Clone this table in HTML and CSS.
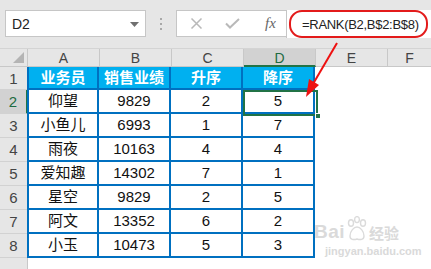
FILE: index.html
```html
<!DOCTYPE html>
<html>
<head>
<meta charset="utf-8">
<link rel="stylesheet" href="styles.css">
</head>
<body>
<div class="app">
  <div class="topbar">
    <div class="namebox">
      <span class="nb-text">D2</span>
      <svg class="dd" width="9" height="5" viewBox="0 0 9 5"><path d="M0 0H9L4.5 5Z" fill="#707070"/></svg>
    </div>
    <div class="sep"><i></i><i></i><i></i></div>
    <div class="btns">
      <svg class="ic" width="13" height="11" viewBox="0 0 13 11"><path d="M1.5 0.5L11.5 10.5M11.5 0.5L1.5 10.5" stroke="#b9b9b9" stroke-width="1.5" fill="none"/></svg>
      <svg class="ic" width="15" height="11" viewBox="0 0 15 11"><path d="M1 5.5L5 9.5L14 1" stroke="#b9b9b9" stroke-width="2" fill="none"/></svg>
      <span class="fx">fx</span>
    </div>
    <div class="formula">
      <div class="ring">=RANK(B2,B$2:B$8)</div>
    </div>
  </div>

  <div class="sheet">
    <div class="colhead">
      <div class="corner"><svg width="11" height="11" viewBox="0 0 11 11"><path d="M11 0V11H0Z" fill="#b4b4b4"/></svg></div>
      <div class="ch">A</div>
      <div class="ch">B</div>
      <div class="ch">C</div>
      <div class="ch sel">D</div>
      <div class="ch">E</div>
      <div class="ch last">F</div>
    </div>

    <div class="row first">
      <div class="rh">1</div>
      <div class="c h lead">业务员</div>
      <div class="c h">销售业绩</div>
      <div class="c h">升序</div>
      <div class="c h">降序</div>
      <div class="rest"></div>
    </div>
    <div class="row">
      <div class="rh sel">2</div>
      <div class="c lead">仰望</div>
      <div class="c">9829</div>
      <div class="c">2</div>
      <div class="c">5</div>
      <div class="rest"></div>
    </div>
    <div class="row">
      <div class="rh">3</div>
      <div class="c lead">小鱼儿</div>
      <div class="c">6993</div>
      <div class="c">1</div>
      <div class="c">7</div>
      <div class="rest"></div>
    </div>
    <div class="row">
      <div class="rh">4</div>
      <div class="c lead">雨夜</div>
      <div class="c">10163</div>
      <div class="c">4</div>
      <div class="c">4</div>
      <div class="rest"></div>
    </div>
    <div class="row">
      <div class="rh">5</div>
      <div class="c lead">爱知趣</div>
      <div class="c">14302</div>
      <div class="c">7</div>
      <div class="c">1</div>
      <div class="rest"></div>
    </div>
    <div class="row">
      <div class="rh">6</div>
      <div class="c lead">星空</div>
      <div class="c">9829</div>
      <div class="c">2</div>
      <div class="c">5</div>
      <div class="rest"></div>
    </div>
    <div class="row">
      <div class="rh">7</div>
      <div class="c lead">阿文</div>
      <div class="c">13352</div>
      <div class="c">6</div>
      <div class="c">2</div>
      <div class="rest"></div>
    </div>
    <div class="row">
      <div class="rh">8</div>
      <div class="c lead">小玉</div>
      <div class="c">10473</div>
      <div class="c">5</div>
      <div class="c">3</div>
      <div class="rest"></div>
    </div>
    <div class="row blank">
      <div class="rh"></div>
      <div class="rest"></div>
    </div>

    <div class="selection"><span class="handle"></span></div>

    <div class="watermark">
      <div class="wm-top">
        <span class="wm-bai">Bai</span>
        <svg class="paw" width="22" height="26" viewBox="0 0 22 26">
          <g fill="none" stroke="#d8d8d8" stroke-width="1.4">
            <ellipse cx="5" cy="7" rx="2.5" ry="3.2"/>
            <ellipse cx="11" cy="3.6" rx="2.4" ry="3"/>
            <ellipse cx="17" cy="7" rx="2.5" ry="3.2"/>
            <path d="M4 20C4 15 8 11 11 11S18 15 18 20C18 24 14 24 11 23C8 24 4 24 4 20Z"/>
          </g>
        </svg>
        <span class="wm-jy">经验</span>
      </div>
      <div class="wm-url">jingyan.baidu.com</div>
    </div>
  </div>

  <svg class="arrow" width="431" height="269" viewBox="0 0 431 269">
    <line x1="337" y1="43" x2="313" y2="84" stroke="#ee1111" stroke-width="2"/>
    <path d="M306 97L309 79L319 85Z" fill="#ee1111"/>
  </svg>
</div>
</body>
</html>
```

FILE: styles.css
```css
* { box-sizing: border-box; }
html, body { margin: 0; padding: 0; }
body {
  width: 431px;
  height: 269px;
  overflow: hidden;
  background: #ffffff;
  font-family: "Liberation Sans", "Noto Sans CJK SC", sans-serif;
}
.app { position: relative; width: 431px; height: 269px; overflow: hidden; }

.topbar {
  height: 48px;
  background: #e6e6e6;
  display: flex;
  align-items: flex-start;
  padding-top: 10px;
  padding-left: 5px;
}
.namebox {
  width: 141px;
  height: 27px;
  background: #fff;
  border: 1px solid #c6c6c6;
  display: flex;
  align-items: center;
  justify-content: space-between;
  padding: 0 6px 0 6px;
}
.nb-text { font-size: 14px; color: #222; }
.dd { margin-top: 1px; }
.sep {
  width: 30px;
  height: 27px;
  display: flex;
  flex-direction: column;
  align-items: center;
  justify-content: center;
  gap: 3px;
}
.sep i { display: block; width: 2px; height: 2px; background: #a8a8a8; }
.btns {
  width: 111px;
  height: 27px;
  background: #fff;
  border: 1px solid #c6c6c6;
  display: flex;
  align-items: center;
  padding-left: 13px;
  gap: 22px;
}
.fx {
  font-family: "Liberation Serif", serif;
  font-style: italic;
  font-size: 15px;
  color: #666;
  margin-left: 3px;
}
.formula {
  flex: 1;
  height: 28px;
  background: #fff;
  border-left: 1px solid #c6c6c6;
  margin-left: -1px;
  padding-left: 2px;
}
.ring {
  width: 139px;
  height: 28px;
  border: 2px solid #e31b1b;
  border-radius: 13px;
  font-size: 13px;
  color: #222;
  display: flex;
  align-items: center;
  padding-left: 11px;
  letter-spacing: -0.3px;
  white-space: nowrap;
}

.sheet { position: relative; }
.colhead {
  height: 19px;
  display: flex;
  background: #e6e6e6;
  border-top: 1px solid #d4d4d4;
}
.corner {
  width: 28px;
  border-right: 1px solid #c8c8c8;
  border-bottom: 1px solid #c8c8c8;
  display: flex;
  align-items: flex-end;
  justify-content: flex-end;
  padding: 0 3px 3px 0;
}
.ch {
  width: 72px;
  border-right: 1px solid #c8c8c8;
  border-bottom: 1px solid #c8c8c8;
  text-align: center;
  font-size: 14px;
  line-height: 18px;
  color: #444;
}
.ch.sel {
  background: #d2d2d2;
  color: #1e6b41;
  border-bottom: 2px solid #217346;
}
.ch.last { flex: 1; border-right: none; }

.row { display: flex; height: 24px; }
.row.first { height: 23px; }
.rh {
  width: 28px;
  flex: none;
  background: #e6e6e6;
  border-right: 1px solid #c8c8c8;
  border-bottom: 1px solid #d2d2d2;
  text-align: center;
  font-size: 15px;
  line-height: 24px;
  color: #444;
}
.row.first .rh { line-height: 23px; }
.rh.sel { background: #d2d2d2; color: #1e6b41; border-right: 2px solid #217346; }
.c {
  width: 72px;
  flex: none;
  border-right: 2px solid #0070c0;
  border-bottom: 2px solid #0070c0;
  background: #fff;
  text-align: center;
  font-size: 15px;
  line-height: 22px;
  color: #111;
  font-family: "Liberation Sans", "Noto Sans CJK SC", sans-serif;
}
.c.lead { width: 72px; border-left: 2px solid #0070c0; margin-left: -1px; }
.c.h {
  background: #00b0f0;
  color: #fff;
  font-weight: bold;
  line-height: 21px;
  font-size: 15px;
}
.rest { flex: 1; background: #fff; }
.row.blank .rh { border-bottom: none; }

.selection {
  position: absolute;
  left: 243px;
  top: 42px;
  width: 75px;
  height: 26px;
  border: 2px solid #217346;
}
.handle {
  position: absolute;
  right: -5px;
  bottom: -5px;
  width: 6px;
  height: 6px;
  background: #217346;
  border: 1px solid #fff;
}

.watermark {
  position: absolute;
  left: 314px;
  top: 166px;
  width: 96px;
  color: #d6d6d6;
  opacity: 0.9;
}
.wm-top { display: flex; align-items: flex-end; height: 28px; }
.wm-bai { font-size: 19px; font-weight: bold; letter-spacing: 0.5px; line-height: 20px; }
.paw { margin-left: 1px; margin-bottom: 0px; }
.wm-jy { font-size: 15px; font-weight: bold; line-height: 18px; margin-left: 1px; font-family: "Noto Sans CJK SC", sans-serif; }
.wm-url { font-size: 11px; margin-left: 11px; margin-top: 3px; font-weight: bold; }

.arrow { position: absolute; left: 0; top: 0; pointer-events: none; }
```
